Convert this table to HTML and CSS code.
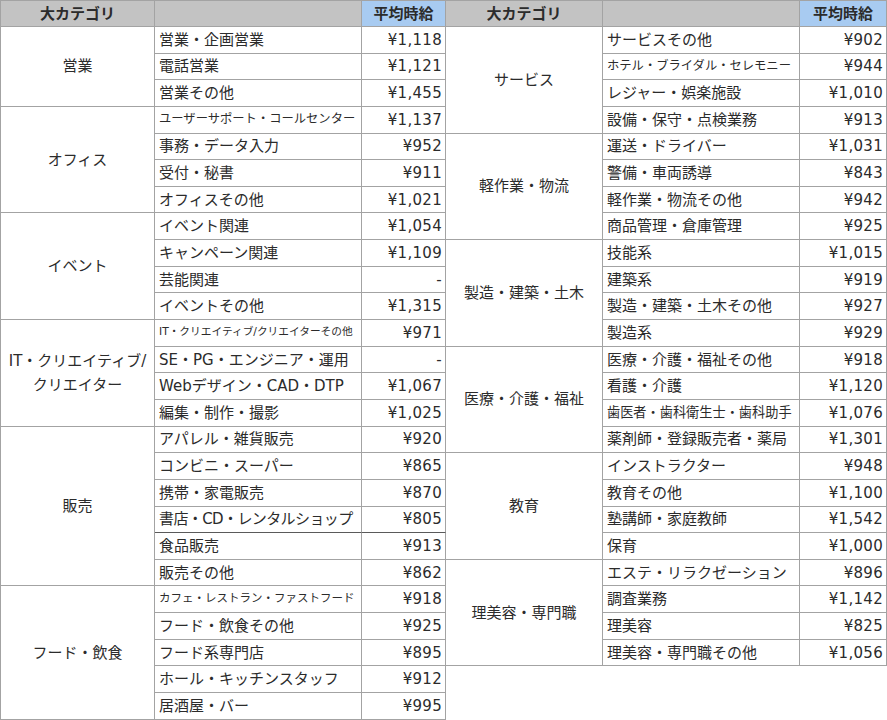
FILE: index.html
```html
<!DOCTYPE html>
<html lang="ja">
<head>
<meta charset="utf-8">
<title>平均時給</title>
<link rel="stylesheet" href="styles.css">
</head>
<body>
<div class="sheet">
  <div class="grid grid-left">
    <div class="cell head g">大カテゴリ</div>
    <div class="cell head n"></div>
    <div class="cell head p blue">平均時給</div>

    <div class="cell g s3">営業</div>
    <div class="cell n">営業・企画営業</div><div class="cell p">¥1,118</div>
    <div class="cell n">電話営業</div><div class="cell p">¥1,121</div>
    <div class="cell n">営業その他</div><div class="cell p">¥1,455</div>

    <div class="cell g s4">オフィス</div>
    <div class="cell n sm12">ユーザーサポート・コールセンター</div><div class="cell p">¥1,137</div>
    <div class="cell n">事務・データ入力</div><div class="cell p">¥952</div>
    <div class="cell n">受付・秘書</div><div class="cell p">¥911</div>
    <div class="cell n">オフィスその他</div><div class="cell p">¥1,021</div>

    <div class="cell g s4">イベント</div>
    <div class="cell n">イベント関連</div><div class="cell p">¥1,054</div>
    <div class="cell n">キャンペーン関連</div><div class="cell p">¥1,109</div>
    <div class="cell n">芸能関連</div><div class="cell p">-</div>
    <div class="cell n">イベントその他</div><div class="cell p">¥1,315</div>

    <div class="cell g s4 two">IT・クリエイティブ/<br>クリエイター</div>
    <div class="cell n sm10">IT・クリエイティブ/クリエイターその他</div><div class="cell p">¥971</div>
    <div class="cell n">SE・PG・エンジニア・運用</div><div class="cell p">-</div>
    <div class="cell n">Webデザイン・CAD・DTP</div><div class="cell p">¥1,067</div>
    <div class="cell n">編集・制作・撮影</div><div class="cell p">¥1,025</div>

    <div class="cell g s6">販売</div>
    <div class="cell n">アパレル・雑貨販売</div><div class="cell p">¥920</div>
    <div class="cell n">コンビニ・スーパー</div><div class="cell p">¥865</div>
    <div class="cell n">携帯・家電販売</div><div class="cell p">¥870</div>
    <div class="cell n dark tight">書店・CD・レンタルショップ</div><div class="cell p dark">¥805</div>
    <div class="cell n">食品販売</div><div class="cell p">¥913</div>
    <div class="cell n">販売その他</div><div class="cell p">¥862</div>

    <div class="cell g s5">フード・飲食</div>
    <div class="cell n sm11">カフェ・レストラン・ファストフード</div><div class="cell p">¥918</div>
    <div class="cell n">フード・飲食その他</div><div class="cell p">¥925</div>
    <div class="cell n">フード系専門店</div><div class="cell p">¥895</div>
    <div class="cell n">ホール・キッチンスタッフ</div><div class="cell p">¥912</div>
    <div class="cell n">居酒屋・バー</div><div class="cell p">¥995</div>
  </div>

  <div class="grid grid-right">
    <div class="cell head g">大カテゴリ</div>
    <div class="cell head n"></div>
    <div class="cell head p blue">平均時給</div>

    <div class="cell g s4">サービス</div>
    <div class="cell n">サービスその他</div><div class="cell p">¥902</div>
    <div class="cell n sm12">ホテル・ブライダル・セレモニー</div><div class="cell p">¥944</div>
    <div class="cell n">レジャー・娯楽施設</div><div class="cell p">¥1,010</div>
    <div class="cell n">設備・保守・点検業務</div><div class="cell p">¥913</div>

    <div class="cell g s4">軽作業・物流</div>
    <div class="cell n">運送・ドライバー</div><div class="cell p">¥1,031</div>
    <div class="cell n">警備・車両誘導</div><div class="cell p">¥843</div>
    <div class="cell n">軽作業・物流その他</div><div class="cell p">¥942</div>
    <div class="cell n">商品管理・倉庫管理</div><div class="cell p">¥925</div>

    <div class="cell g s4">製造・建築・土木</div>
    <div class="cell n">技能系</div><div class="cell p">¥1,015</div>
    <div class="cell n">建築系</div><div class="cell p">¥919</div>
    <div class="cell n">製造・建築・土木その他</div><div class="cell p">¥927</div>
    <div class="cell n">製造系</div><div class="cell p">¥929</div>

    <div class="cell g s4">医療・介護・福祉</div>
    <div class="cell n">医療・介護・福祉その他</div><div class="cell p">¥918</div>
    <div class="cell n">看護・介護</div><div class="cell p">¥1,120</div>
    <div class="cell n sm13">歯医者・歯科衛生士・歯科助手</div><div class="cell p">¥1,076</div>
    <div class="cell n">薬剤師・登録販売者・薬局</div><div class="cell p">¥1,301</div>

    <div class="cell g s4">教育</div>
    <div class="cell n">インストラクター</div><div class="cell p">¥948</div>
    <div class="cell n">教育その他</div><div class="cell p">¥1,100</div>
    <div class="cell n">塾講師・家庭教師</div><div class="cell p">¥1,542</div>
    <div class="cell n">保育</div><div class="cell p">¥1,000</div>

    <div class="cell g s4">理美容・専門職</div>
    <div class="cell n">エステ・リラクゼーション</div><div class="cell p">¥896</div>
    <div class="cell n">調査業務</div><div class="cell p">¥1,142</div>
    <div class="cell n">理美容</div><div class="cell p">¥825</div>
    <div class="cell n">理美容・専門職その他</div><div class="cell p">¥1,056</div>
  </div>
</div>
</body>
</html>
```

FILE: styles.css
```css
html, body {
  margin: 0;
  padding: 0;
  background: #ffffff;
}

body {
  font-family: "DejaVu Sans", "Noto Sans CJK JP", sans-serif;
  font-size: 15px;
  color: #2b2b2b;
  width: 887px;
  height: 720px;
  overflow: hidden;
}

.sheet {
  display: flex;
  align-items: flex-start;
}

.grid {
  display: grid;
  border-top: 1px solid #a3a3a3;
}

.grid-left {
  border-left: 1px solid #a3a3a3;
  grid-template-columns: 154px 207px 84px;
  grid-template-rows: 26px repeat(26, 26.654px);
}

.grid-right {
  grid-template-columns: 157px 197px 87px;
  grid-template-rows: 26px repeat(24, 26.654px);
}

.cell {
  box-sizing: border-box;
  border-right: 1px solid #a3a3a3;
  border-bottom: 1px solid #a3a3a3;
  display: flex;
  align-items: center;
  white-space: nowrap;
  overflow: hidden;
  line-height: 1.2;
}

.g {
  grid-column: 1;
  justify-content: center;
  text-align: center;
}

.n {
  grid-column: 2;
  padding-left: 4px;
}

.p {
  grid-column: 3;
  justify-content: flex-end;
  padding-right: 3px;
  font-size: 15px;
  letter-spacing: 0.3px;
}

.head {
  background: #c3c3c3;
  font-weight: bold;
  font-size: 15px;
  letter-spacing: 0;
  justify-content: center;
  padding: 0;
}

.head.blue {
  background: #a8cbf1;
}

.s3 { grid-row: span 3; }
.s4 { grid-row: span 4; }
.s5 { grid-row: span 5; }
.s6 { grid-row: span 6; }

.two {
  line-height: 1.6;
}

.sm10 { font-size: 10.7px; }
.sm11 { font-size: 11.5px; }
.sm12 { font-size: 12.3px; }
.sm13 { font-size: 13.2px; }

.tight {
  letter-spacing: -0.6px;
}

.dark {
  border-bottom-color: #5a5a5a;
}
```
